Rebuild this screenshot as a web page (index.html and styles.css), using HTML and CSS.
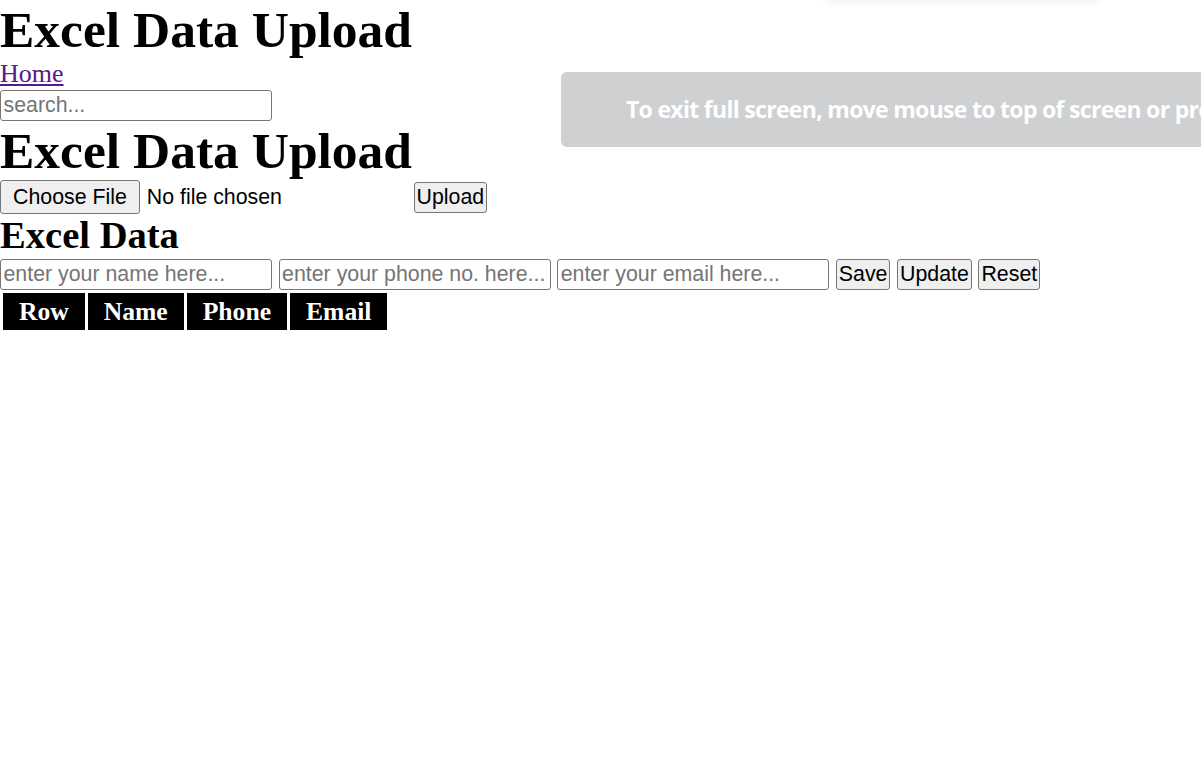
FILE: index.html
```html
<!DOCTYPE html>
<html>
<head>
<meta charset="utf-8">
<title>Excel Data Upload</title>
<link rel="stylesheet" href="styles.css">
</head>
<body>
<div class="page">
  <h1 class="title">Excel Data Upload</h1>
  <a href="#" class="home">Home</a>
  <div class="row"><input type="text" class="field" placeholder="search..."></div>
  <h1 class="title">Excel Data Upload</h1>
  <div class="row"><input type="file" class="file"> <button class="btn">Upload</button></div>
  <h2 class="subtitle">Excel Data</h2>
  <div class="row">
    <input type="text" class="field" placeholder="enter your name here...">
    <input type="text" class="field" placeholder="enter your phone no. here...">
    <input type="text" class="field" placeholder="enter your email here...">
    <button class="btn">Save</button>
    <button class="btn">Update</button>
    <button class="btn">Reset</button>
  </div>
  <table class="data">
    <thead>
      <tr><th>Row</th><th>Name</th><th>Phone</th><th>Email</th></tr>
    </thead>
    <tbody></tbody>
  </table>
</div>
<div class="top-shadow"></div>
<div class="fs-bubble">To exit full screen, move mouse to top of screen or press F11</div>
</body>
</html>
```
FILE: styles.css
```css
html, body {
  margin: 0;
  padding: 0;
  background: #fff;
}
body {
  overflow: hidden;
  font-family: "Liberation Serif", "Times New Roman", serif;
  font-size: 25.6px;
  color: #000;
}
.title {
  margin: 0;
  font-size: 51.5px;
  font-weight: bold;
  line-height: 1.15;
}
.subtitle {
  margin: 0;
  font-size: 38.6px;
  font-weight: bold;
  line-height: 1.12;
}
.home {
  font-size: 26px;
  color: #551a8b;
}
.row {
  line-height: 1.15;
  word-spacing: 0.2px;
}
.field {
  box-sizing: border-box;
  width: 272px;
  height: 31px;
  margin: 0;
  padding: 2px 2px 2px 2.5px;
  border: 1px solid #767676;
  border-radius: 3px;
  background: #fff;
  font-family: "Liberation Sans", Arial, sans-serif;
  font-size: 21.33px;
  word-spacing: 0;
  color: #000;
  vertical-align: baseline;
}
.field::placeholder {
  color: #757575;
}
.btn {
  margin: 0;
  padding: 2px 2px;
  border: 1px solid #767676;
  border-radius: 3px;
  background: #efefef;
  font-family: "Liberation Sans", Arial, sans-serif;
  font-size: 21.33px;
  word-spacing: 0;
  color: #000;
}
.file {
  width: 407px;
  margin: 0;
  padding: 0;
  font-family: "Liberation Sans", Arial, sans-serif;
  font-size: 21.33px;
  word-spacing: 0;
  color: #000;
}
.file::file-selector-button {
  margin: 0 7px 0 0;
  padding: 3.5px 12px;
  border: 1px solid #767676;
  border-radius: 3px;
  background: #efefef;
  font-family: "Liberation Sans", Arial, sans-serif;
  font-size: 21.33px;
  color: #000;
}
.data {
  border-spacing: 3px;
  margin-top: 0;
}
.data th {
  background: #000;
  color: #fff;
  font-size: 25.6px;
  font-weight: bold;
  line-height: 1.15;
  padding: 4px 16px;
}
.top-shadow {
  position: fixed;
  top: -40px;
  left: 825px;
  width: 275px;
  height: 40px;
  border-radius: 8px;
  background: #fff;
  box-shadow: 0 1px 8px rgba(0, 0, 0, 0.08);
}
.fs-bubble {
  position: fixed;
  top: 72px;
  left: 561px;
  width: 960px;
  height: 75px;
  box-sizing: border-box;
  padding-left: 65px;
  background: #cfd0d2;
  border-radius: 6px;
  color: #fff;
  font-family: "Open Sans", "Noto Sans", sans-serif;
  font-weight: 700;
  font-size: 23px;
  letter-spacing: -0.7px;
  line-height: 74px;
  white-space: nowrap;
}
```
